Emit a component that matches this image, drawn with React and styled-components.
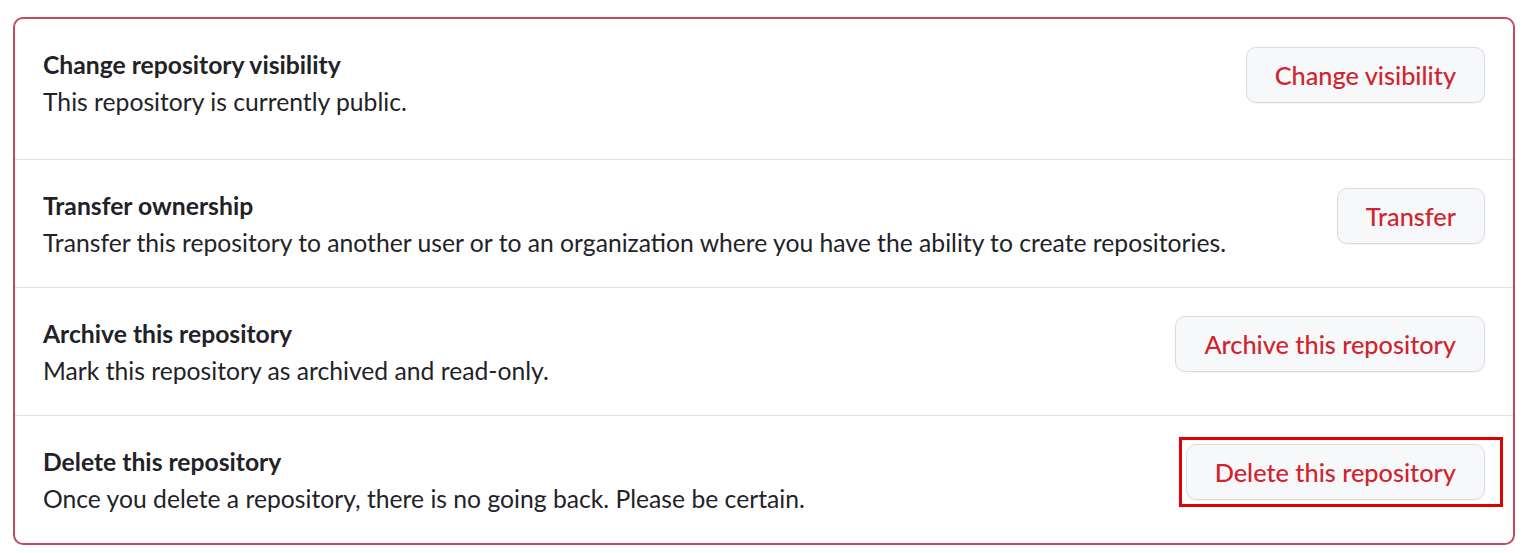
import React from "react";
import styled, { createGlobalStyle } from "styled-components";

const GlobalStyle = createGlobalStyle`
  body {
    margin: 0;
    background: #ffffff;
    font-family: Lato, "Open Sans", sans-serif;
    color: #1f2328;
  }
`;

const Page = styled.div`
  padding: 17px 18px 8px 13px;
`;

const DangerBox = styled.div`
  border: 2px solid #c44a62;
  border-radius: 10px;
  background: #ffffff;
`;

const Row = styled.div`
  display: flex;
  align-items: flex-start;
  gap: 24px;
  padding: ${({ $first }) => ($first ? "28px 28px 38.5px 28px" : "28px 28px 25.5px 28px")};
  border-top: ${({ $first }) => ($first ? "none" : "1px solid #dfe2e5")};
`;

const Info = styled.div`
  flex: 1;
  font-size: 24.7px;
  line-height: 36.75px;
`;

const Title = styled.div`
  font-weight: 700;
`;

const Description = styled.p`
  margin: 0;
`;

const ButtonWrap = styled.div`
  position: relative;
  flex-shrink: 0;
`;

const DangerButton = styled.button`
  height: 56px;
  padding: 0 28px;
  border: 1px solid #d8dce1;
  border-radius: 10px;
  background: #f6f8fa;
  color: #d1242f;
  font-family: inherit;
  font-size: 25.3px;
  font-weight: 500;
  cursor: pointer;
  box-shadow: 0 1px 0 rgba(31, 35, 40, 0.04);
`;

const Highlight = styled.span`
  position: absolute;
  left: -7px;
  top: -7px;
  right: -18px;
  bottom: -7px;
  border: 3px solid #e00000;
  pointer-events: none;
`;

const rows = [
  {
    title: "Change repository visibility",
    text: "This repository is currently public.",
    action: "Change visibility",
  },
  {
    title: "Transfer ownership",
    text: "Transfer this repository to another user or to an organization where you have the ability to create repositories.",
    action: "Transfer",
  },
  {
    title: "Archive this repository",
    text: "Mark this repository as archived and read-only.",
    action: "Archive this repository",
  },
  {
    title: "Delete this repository",
    text: "Once you delete a repository, there is no going back. Please be certain.",
    action: "Delete this repository",
    marked: true,
  },
];

const App = () => {
  return (
    <Page>
      <GlobalStyle />
      <DangerBox>
        {rows.map((row, i) => (
          <Row key={row.title} $first={i === 0}>
            <Info>
              <Title>{row.title}</Title>
              <Description>{row.text}</Description>
            </Info>
            <ButtonWrap>
              <DangerButton>{row.action}</DangerButton>
              {row.marked && <Highlight />}
            </ButtonWrap>
          </Row>
        ))}
      </DangerBox>
    </Page>
  );
};

export default App;
